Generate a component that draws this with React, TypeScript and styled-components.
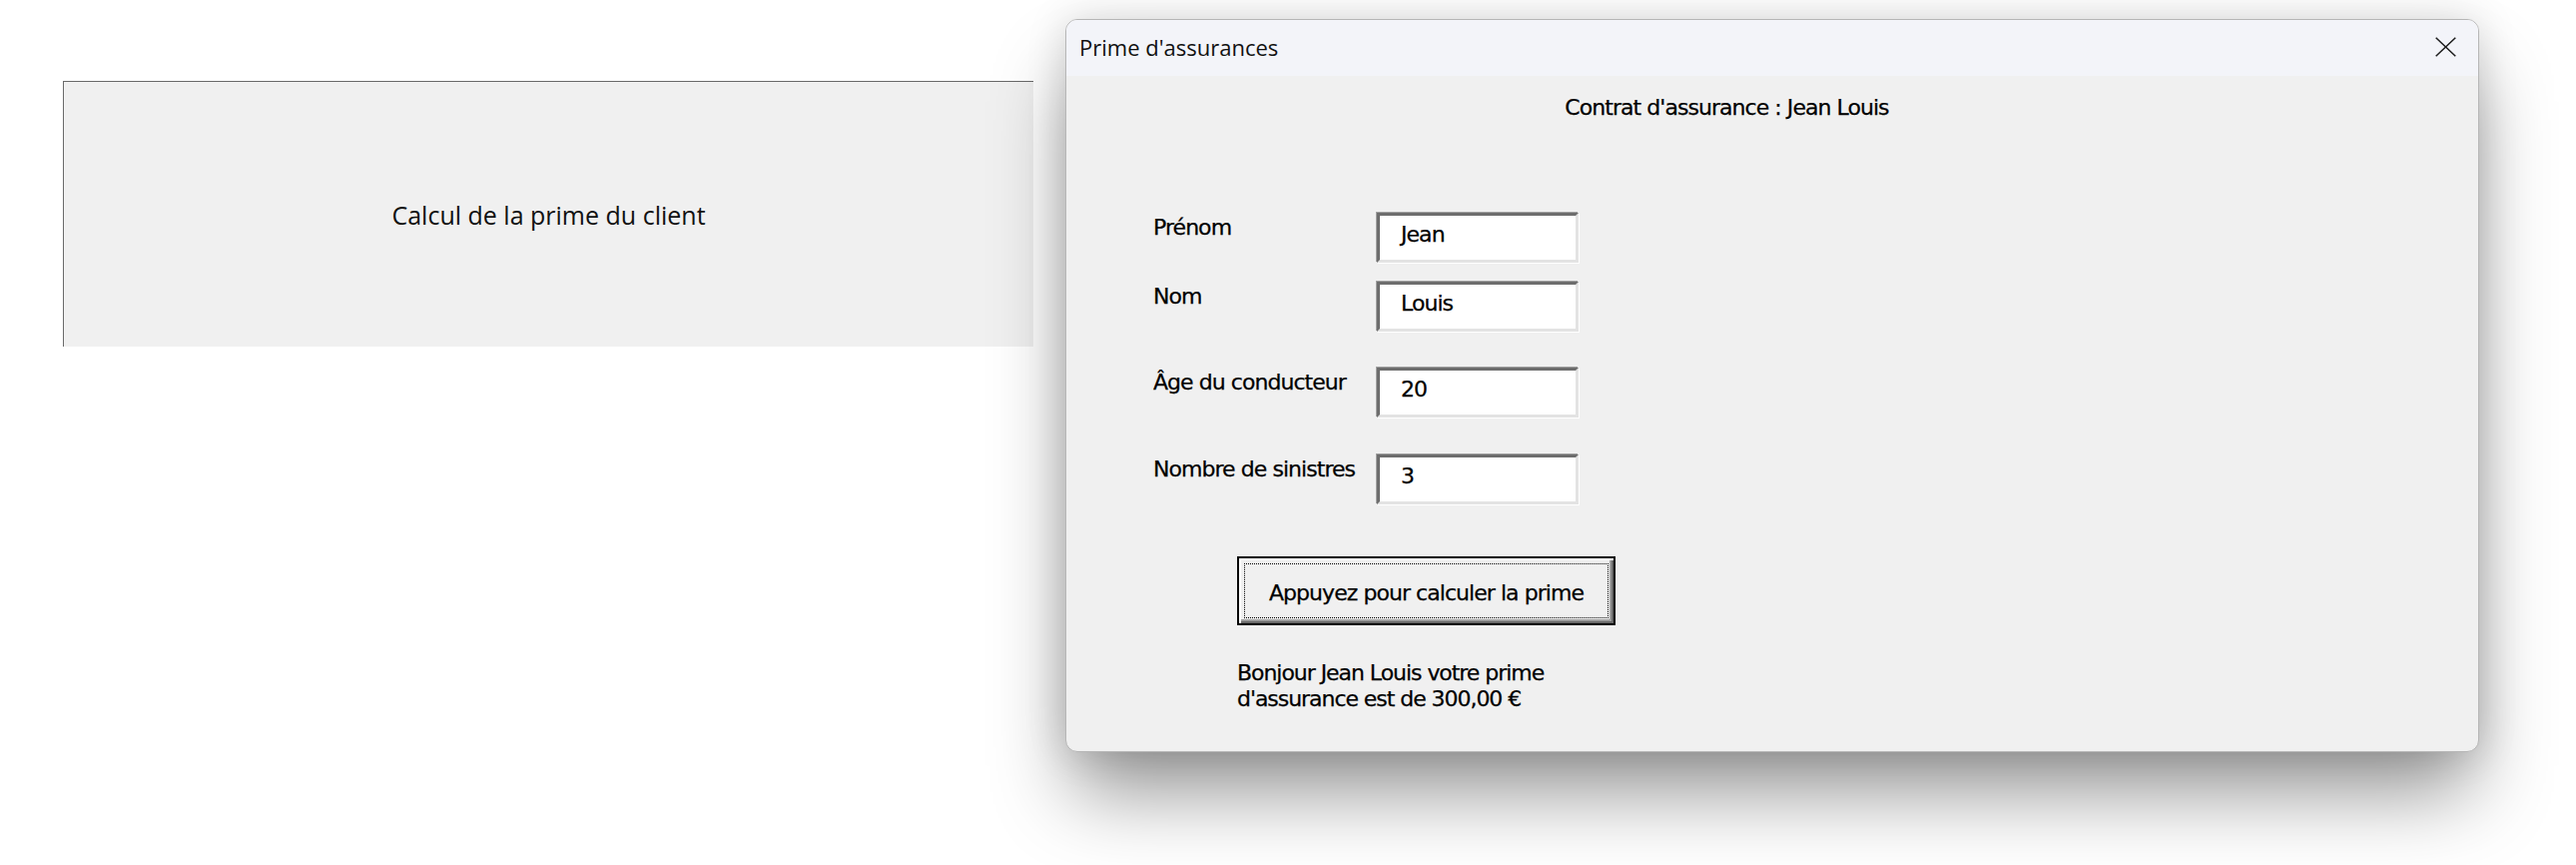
import React from "react";
import styled, { createGlobalStyle } from "styled-components";

const GlobalStyle = createGlobalStyle`
  html, body {
    margin: 0;
    padding: 0;
    background: #ffffff;
  }
  body {
    width: 2580px;
    height: 866px;
    overflow: hidden;
  }
  * { box-sizing: border-box; }
`;

const Page = styled.div`
  display: flex;
  align-items: flex-start;
  gap: 32px;
  padding-left: 63px;
  height: 866px;
  width: 2580px;
`;

const Panel = styled.div`
  margin-top: 81px;
  width: 972px;
  height: 266px;
  background: #f0f0f0;
  border-top: 1px solid #6a6a6a;
  border-left: 1px solid #6a6a6a;
  display: flex;
  align-items: center;
  justify-content: center;
  font-family: "Open Sans", "Noto Sans", sans-serif;
  font-size: 25px;
  color: #111;
`;

const Dialog = styled.div`
  margin-top: 19px;
  width: 1416px;
  height: 734px;
  border: 1px solid #b6b6b6;
  border-radius: 12px;
  overflow: hidden;
  display: flex;
  flex-direction: column;
  background: #f0f0f0;
  box-shadow: 0 48px 80px -8px rgba(0, 0, 0, 0.42), 0 0 40px rgba(0, 0, 0, 0.14);
`;

const TitleBar = styled.div`
  height: 56px;
  flex: none;
  background: #f3f4f9;
  display: flex;
  align-items: center;
  justify-content: space-between;
  padding-left: 13px;
  padding-right: 22px;
`;

const Title = styled.span`
  font-family: "Open Sans", "Noto Sans", sans-serif;
  font-size: 22px;
  color: #111;
  margin-top: -2px;
`;

const CloseButton = styled.div`
  width: 21px;
  height: 20px;
  display: flex;
  margin-top: -2px;
`;

const Body = styled.div`
  flex: 1;
  display: flex;
  flex-direction: column;
  align-items: flex-start;
  padding-top: 19px;
  font-family: "DejaVu Sans", "Liberation Sans", sans-serif;
  font-size: 22px;
  line-height: 26px;
  letter-spacing: -0.95px;
  color: #000;
  -webkit-text-stroke: 0.25px #000;
`;

const Heading = styled.div`
  width: 1323px;
  text-align: center;
`;

const Form = styled.div`
  margin-top: 92px;
  margin-left: 87px;
  display: flex;
  flex-direction: column;
`;

const FieldRow = styled.div<{ $gap: number }>`
  display: grid;
  grid-template-columns: 224px 202px;
  align-items: start;
  margin-top: ${(p) => p.$gap}px;
`;

const Label = styled.div`
  padding-top: 2px;
  white-space: nowrap;
`;

const TextBox = styled.div`
  height: 50px;
  background: #ffffff;
  border-style: solid;
  border-width: 3px;
  border-color: #6d6d6d #e3e3e3 #e3e3e3 #6d6d6d;
  box-shadow: -1px -1px 0 #a0a0a0, 1px 1px 0 #ffffff;
  padding: 6px 0 0 21px;
  white-space: nowrap;
`;

const CalcButton = styled.button`
  margin-top: 52px;
  margin-left: 171px;
  width: 379px;
  height: 69px;
  padding: 4px 0 0 0;
  background: #f0f0f0;
  border: 2px solid #000;
  box-shadow: inset 2px 2px 0 #ffffff, inset -2px -2px 0 #696969, inset -4px -4px 0 #a0a0a0;
  outline: 1px dotted #000;
  outline-offset: -8px;
  font: inherit;
  letter-spacing: inherit;
  line-height: 26px;
  color: #000;
  display: flex;
  align-items: center;
  justify-content: center;
  cursor: default;
`;

const Result = styled.div`
  margin-top: 35px;
  margin-left: 171px;
  white-space: nowrap;
  letter-spacing: -1.05px;
`;

const fields = [
  { label: "Prénom", value: "Jean", gap: 0 },
  { label: "Nom", value: "Louis", gap: 19 },
  { label: "Âge du conducteur", value: "20", gap: 36 },
  { label: "Nombre de sinistres", value: "3", gap: 37 },
];

export default function App() {
  return (
    <>
      <GlobalStyle />
      <Page>
        <Panel>Calcul de la prime du client</Panel>
        <Dialog>
          <TitleBar>
            <Title>Prime d'assurances</Title>
            <CloseButton>
              <svg width="21" height="20" viewBox="0 0 21 20">
                <path d="M0.7 0.7 L20.3 19.3 M20.3 0.7 L0.7 19.3" stroke="#1b1b1b" strokeWidth="1.5" fill="none" />
              </svg>
            </CloseButton>
          </TitleBar>
          <Body>
            <Heading>Contrat d'assurance : Jean Louis</Heading>
            <Form>
              {fields.map((f) => (
                <FieldRow key={f.label} $gap={f.gap}>
                  <Label>{f.label}</Label>
                  <TextBox>{f.value}</TextBox>
                </FieldRow>
              ))}
            </Form>
            <CalcButton type="button">Appuyez pour calculer la prime</CalcButton>
            <Result>
              Bonjour Jean Louis votre prime
              <br />
              d'assurance est de 300,00 €
            </Result>
          </Body>
        </Dialog>
      </Page>
    </>
  );
}
